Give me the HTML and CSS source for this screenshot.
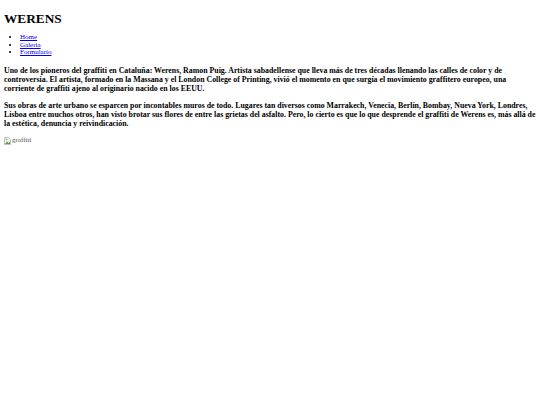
FILE: index.html
```html
<!DOCTYPE html>
<html lang="es">
<head>
<meta charset="utf-8">
<title>WERENS</title>
<link rel="stylesheet" href="styles.css">
</head>
<body class="page">
<header class="site-header">
<h1 class="site-title">WERENS</h1>
<nav class="site-nav">
<ul class="nav-list">
<li class="nav-item"><a class="nav-link" href="#">Home</a></li>
<li class="nav-item"><a class="nav-link" href="#">Galeria</a></li>
<li class="nav-item"><a class="nav-link" href="#">Formulario</a></li>
</ul>
</nav>
</header>
<main class="content">
<p class="intro">Uno de los pioneros del graffiti en Cataluña: Werens, Ramon Puig. Artista sabadellense que lleva más de tres décadas llenando las calles de color y de controversia. El artista, formado en la Massana y el London College of Printing, vivió el momento en que surgía el movimiento graffitero europeo, una corriente de graffiti ajeno al originario nacido en los EEUU.</p>
<p class="intro">Sus obras de arte urbano se esparcen por incontables muros de todo. Lugares tan diversos como Marrakech, Venecia, Berlín, Bombay, Nueva York, Londres, Lisboa entre muchos otros, han visto brotar sus flores de entre las grietas del asfalto. Pero, lo cierto es que lo que desprende el graffiti de Werens es, más allá de la estética, denuncia y reivindicación.</p>
<div class="figure"><span class="broken-img"><svg class="broken-icon" width="7" height="8" viewBox="0 0 14 16" aria-hidden="true"><path d="M1 1h8l4 4v10H1z" fill="#f4f4f4" stroke="#9a9a9a" stroke-width="1.2"/><path d="M2 14l4-5 3 3 3-2v4z" fill="#5aa04a"/><circle cx="5" cy="5" r="1.6" fill="#6aa0d8"/></svg><span class="alt-text">graffiti</span></span></div>
</main>
</body>
</html>
```
FILE: styles.css
```css
html { background: #fff; }
.page {
  margin: 4px;
  font-family: "Liberation Serif", "Times New Roman", serif;
  font-size: 7.85px;
  color: #000;
}
.site-title {
  font-size: 13.3px;
  font-weight: bold;
  margin: 6px 0 0;
  line-height: 18px;
}
.nav-list {
  margin: 6px 0 0;
  padding-left: 16px;
  font-size: 7px;
  line-height: 7.5px;
}
.nav-link { color: #00e; }
.content { padding-top: 1.75px; }
.intro {
  font-weight: bold;
  margin: 8px 0;
  line-height: 9px;
}
.figure { margin: 8px 0; line-height: 9px; }
.broken-img { display: inline-flex; align-items: center; gap: 1px; }
.alt-text { color: #555; font-size: 7px; }
```
